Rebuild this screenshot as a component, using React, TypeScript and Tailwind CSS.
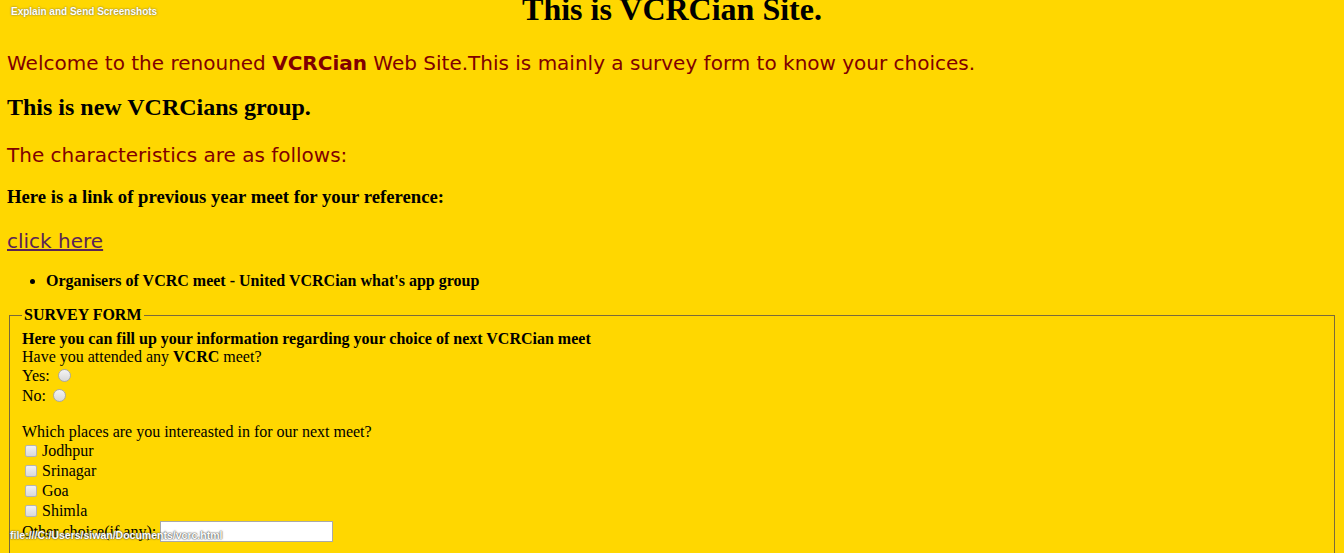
import React from "react";

const serif = "font-['Liberation_Serif',serif]";
const verdana = "font-['DejaVu_Sans',Verdana,sans-serif]";

const places = ["Jodhpur", "Srinagar", "Goa", "Shimla"];

const Radio = ({ gap }: { gap: string }) => (
  <span
    className={`inline-block w-[13px] h-[13px] rounded-full border border-[#a9a9a9] bg-gradient-to-b from-[#f4f4f4] to-[#d8d8d8] align-[-1px] ${gap}`}
  />
);

const Check = () => (
  <span className="inline-block w-[12px] h-[12px] rounded-[2px] border border-[#b4b4b4] bg-gradient-to-b from-[#f2f2f2] to-[#d9d9d9] mr-[5px] ml-[4px] align-[-1px]" />
);

const App = () => {
  return (
    <div className={`relative h-screen bg-[#ffd700] px-[7px] overflow-hidden ${serif}`}>
      <h1 className="text-[32px] leading-[18px] h-[18px] font-bold text-center text-black">This is VCRCian Site.</h1>

      <p className={`mt-[33px] text-[20px] leading-[24px] text-[#800000] ${verdana}`}>
        Welcome to the renouned <b>VCRCian</b> Web Site.This is mainly a survey form to know your choices.
      </p>

      <h2 className="mt-[18px] text-[24px] leading-[28px] font-bold text-black">This is new VCRCians group.</h2>

      <p className={`mt-[22px] text-[20px] leading-[24px] text-[#800000] ${verdana}`}>The characteristics are as follows:</p>

      <h3 className="mt-[19px] text-[18.72px] leading-[22px] font-bold text-black">
        Here is a link of previous year meet for your reference:
      </h3>

      <p className={`mt-[21px] text-[20px] leading-[24px] ${verdana}`}>
        <a href="#" className="text-[#5a2456] underline">click here</a>
      </p>

      <ul className="mt-[19px] pl-[39px] list-disc text-[16px] leading-[18px] font-bold text-black">
        <li>Organisers of VCRC meet - United VCRCian what's app group</li>
      </ul>

      <fieldset className="mt-[16px] mx-[2px] border border-[#7a6a3a] pl-[12px] pr-[12px] pb-[14px] text-[16px] text-black">
        <legend className="px-[2px] font-bold leading-[18px]">SURVEY FORM</legend>
        <div className="leading-[18px] pt-[6px]">
          <div className="font-bold">Here you can fill up your information regarding your choice of next VCRCian meet</div>
          <div>
            Have you attended any <b>VCRC</b> meet?
          </div>
          <div className="h-[20px] leading-[20px]">
            Yes:
            <Radio gap="ml-[8px]" />
          </div>
          <div className="h-[19px] leading-[19px]">
            No:
            <Radio gap="ml-[7px]" />
          </div>
          <div className="h-[18px]" />
          <div>Which places are you intereasted in for our next meet?</div>
          {places.map((p) => (
            <div key={p} className="h-[20px] leading-[20px] -ml-[1px]">
              <Check />
              {p}
            </div>
          ))}
          <div className="h-[21px] leading-[21px] flex items-center">
            <span>Other choice(if any):</span>
            <span className="ml-[4px] inline-block w-[173px] h-[21px] bg-white border border-[#a9a9a9]" />
          </div>
        </div>
      </fieldset>

      {/* browser overlays captured in the screenshot */}
      <div className="absolute left-[11px] top-[4px] text-[10px] font-bold text-white font-['Liberation_Sans',Arial,sans-serif] [text-shadow:0_0_2px_#555]">
        Explain and Send Screenshots
      </div>
      <div className="absolute left-[10px] top-[528px] text-[10.5px] font-bold text-white font-['Liberation_Sans',Arial,sans-serif] [text-shadow:0_0_2px_#444,0_0_1px_#444]">
        file:///C:/Users/siwan/Documents/vcrc.html
      </div>
    </div>
  );
};

export default App;
